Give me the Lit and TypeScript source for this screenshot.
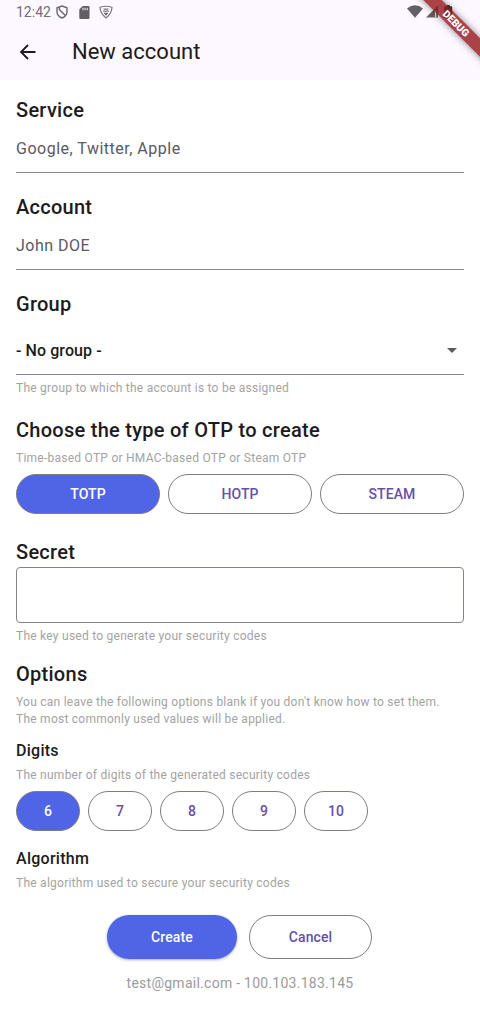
import { LitElement, html, css } from "lit";
import { customElement } from "lit/decorators.js";
import { classMap } from "lit/directives/class-map.js";

@customElement("status-bar")
class StatusBar extends LitElement {
  static styles = css`
    :host { display: flex; height: 24px; align-items: center; padding: 0 16px; color: #736f75; }
    .time { font-size: 14px; line-height: 24px; letter-spacing: 0; width: 35px; }
    svg { display: block; flex: none; }
    .shield { margin-left: 4px; }
    .card { margin-left: 10px; }
    .badge { margin-left: 9px; }
    .right { margin-left: auto; display: flex; align-items: center; gap: 3px; margin-right: 11px; margin-top: -1px; }
    .battery { margin-left: 3px; }
  `;
  render() {
    return html`
      <span class="time">12:42</span>
      <svg class="shield" width="14" height="14" viewBox="0 0 14 14" fill="none" stroke="#6b676d" stroke-width="1.4">
        <path d="M7 1 12 2.8V6.6C12 9.8 9.9 12 7 13 4.1 12 2 9.8 2 6.6V2.8Z" />
        <path d="M4.4 2.2V4.8L10.6 10.8" />
      </svg>
      <svg class="card" width="11" height="13" viewBox="0 0 11 13">
        <path d="M3.6 0H9.4Q10.5 0 10.5 1.1V11.9Q10.5 13 9.4 13H1.4Q.3 13 .3 11.9V3.4Z" fill="#625e64" />
        <path d="M4 1.8V4.2M6.1 1.8V4.2M8.2 1.8V4.2" stroke="#fdf7ff" stroke-width="1" />
      </svg>
      <svg class="badge" width="14" height="14" viewBox="0 0 14 14" fill="none" stroke="#7a767c" stroke-width="1.2" stroke-linejoin="round">
        <path d="M1 2.3Q7 .2 13 2.3 12.8 8.5 7 13 1.2 8.5 1 2.3Z" />
        <path d="M4.6 4.2H9.4M4.2 6.2H9.8" stroke-width="1.3" />
        <path d="M4.6 7.8H9.4L7 10.8Z" fill="#6b676d" stroke="none" />
      </svg>
      <span class="right">
        <svg width="16" height="13" viewBox="0 0 16 13"><path d="M0 3.4Q8-2.8 16 3.4L8 12.8Z" fill="#625e64" /></svg>
        <svg width="12" height="13" viewBox="0 0 12 13">
          <path d="M0 12.6 12 .6V12.6Z" fill="#625e64" /><path d="M9.6 5V12.2" stroke="#e6e0e8" stroke-width="1.4" />
        </svg>
        <svg class="battery" width="9" height="14" viewBox="0 0 9 14">
          <path d="M2.6 0H5.8V1.3H7.4Q8.2 1.3 8.2 2.1V12.6Q8.2 13.4 7.4 13.4H1Q.2 13.4 .2 12.6V2.1Q.2 1.3 1 1.3H2.6Z" fill="#3f3c41" />
        </svg>
      </span>`;
  }
}

@customElement("choice-chips")
class ChoiceChips extends LitElement {
  static properties = { options: { type: Array }, selected: { type: String }, compact: { type: Boolean } };
  declare options: string[];
  declare selected: string;
  declare compact: boolean;
  static styles = css`
    :host { display: block; }
    .row { display: flex; gap: 8px; }
    button {
      flex: 1 1 0; height: 40px; box-sizing: border-box; padding: 0; border: 1px solid #7f7c85; border-radius: 20px;
      background: #fff; color: #6750a4; font: 500 14px/20px Roboto, sans-serif; letter-spacing: 0.1px; cursor: pointer;
    }
    .compact button { flex: 0 0 64px; }
    button.on { background: #4f65e6; color: #fff; }
  `;
  render() {
    return html`<div class=${classMap({ row: true, compact: !!this.compact })}>
      ${this.options.map(
        (o) => html`<button class=${classMap({ on: o === this.selected })} @click=${() => { this.selected = o; }}>${o}</button>`
      )}
    </div>`;
  }
}

@customElement("app-root")
class AppRoot extends LitElement {
  static styles = css`
    :host {
      display: block; position: relative; width: 480px; height: 1014px; overflow: hidden; background: #fff;
      font-family: Roboto, sans-serif; color: #1d1b20;
    }
    header { height: 80px; background: #fdf7ff; }
    .bar { display: flex; align-items: center; height: 56px; padding-left: 19px; }
    .bar svg { display: block; }
    h1 { margin: 0 0 0 35px; font-weight: 400; font-size: 22px; line-height: 28px; letter-spacing: 0; }
    main { padding: 18px 16px 0; height: 817px; box-sizing: border-box; }
    h2 { margin: 0; font-weight: 500; font-size: 20px; line-height: 24px; letter-spacing: 0.27px; }
    h3 { margin: 0; font-weight: 500; font-size: 16px; line-height: 20px; letter-spacing: 0.27px; }
    .field {
      height: 35px; margin-top: 15px; border-bottom: 1px solid #8b8891; font-size: 16px; line-height: 24px;
      letter-spacing: 0.5px; color: #5b585f; margin-bottom: 22px;
    }
    .select {
      display: flex; justify-content: space-between; margin: 23px 0 5px; padding-right: 7px; box-sizing: border-box;
      height: 36px; color: #1d1b20; font-weight: 500; letter-spacing: 0.08px;
    }
    .select svg { margin-top: 9px; }
    .help { font-size: 12px; line-height: 16px; letter-spacing: 0.25px; color: #a3a3a3; }
    .type { margin-top: 22px; }
    .type + .help { margin: 8px 0 8px; }
    .secret { margin-top: 26px; }
    .box { height: 56px; margin: 3px 0 5px; box-sizing: border-box; border: 1px solid #85828b; border-radius: 4px; }
    .options { margin-top: 18px; }
    .options + .help { line-height: 17px; margin: 8px 0 13px; }
    h3 + .help { margin: 6px 0 8px; }
    .algorithm { margin-top: 18px; }
    .actions { display: flex; justify-content: center; gap: 12px; margin-top: 18px; padding-right: 1px; }
    .actions button {
      width: 123px; height: 44px; padding: 0; box-sizing: border-box; border-radius: 22px; border: 1px solid #7f7c85;
      background: #fff; color: #6750a4; font: 500 14px/20px Roboto, sans-serif; letter-spacing: 0.1px;
    }
    .actions .primary { width: 130px; border: 0; background: #4f65e6; color: #fff; box-shadow: 0 1px 3px #0005; }
    footer { margin-top: 16px; text-align: center; font-size: 14px; line-height: 16px; letter-spacing: 0.26px; color: #9b9b9b; }
    .ribbon {
      position: absolute; z-index: 1; top: 17px; left: 391px; width: 130px; height: 13px; transform: rotate(45deg);
      background: rgba(149, 21, 26, 0.8); color: #fff; text-align: center; font-weight: 900; font-size: 10.2px;
      line-height: 13px; box-shadow: 0 0 7px #0007;
    }
  `;
  render() {
    return html`
      <header>
        <status-bar></status-bar>
        <div class="bar">
          <svg width="18" height="18" viewBox="0 0 18 18" fill="none" stroke="#1d1b20" stroke-width="1.8">
            <path d="M16.5 9H2.5M9 2 2 9 9 16" />
          </svg>
          <h1>New account</h1>
        </div>
      </header>
      <main>
        <h2>Service</h2>
        <div class="field">Google, Twitter, Apple</div>
        <h2>Account</h2>
        <div class="field">John DOE</div>
        <h2>Group</h2>
        <div class="field select">
          <span>- No group -</span>
          <svg width="10" height="5" viewBox="0 0 10 5"><path d="M0 0H10L5 5Z" fill="#5b585f" /></svg>
        </div>
        <div class="help">The group to which the account is to be assigned</div>
        <h2 class="type">Choose the type of OTP to create</h2>
        <div class="help">Time-based OTP or HMAC-based OTP or Steam OTP</div>
        <choice-chips .options=${["TOTP", "HOTP", "STEAM"]} .selected=${"TOTP"}></choice-chips>
        <h2 class="secret">Secret</h2>
        <div class="box"></div>
        <div class="help">The key used to generate your security codes</div>
        <h2 class="options">Options</h2>
        <div class="help">
          You can leave the following options blank if you don't know how to set them.<br />The most commonly used values
          will be applied.
        </div>
        <h3>Digits</h3>
        <div class="help">The number of digits of the generated security codes</div>
        <choice-chips .compact=${true} .options=${["6", "7", "8", "9", "10"]} .selected=${"6"}></choice-chips>
        <h3 class="algorithm">Algorithm</h3>
        <div class="help">The algorithm used to secure your security codes</div>
      </main>
      <div class="actions">
        <button class="primary">Create</button>
        <button>Cancel</button>
      </div>
      <footer>test@gmail.com - 100.103.183.145</footer>
      <div class="ribbon">DEBUG</div>`;
  }
}
